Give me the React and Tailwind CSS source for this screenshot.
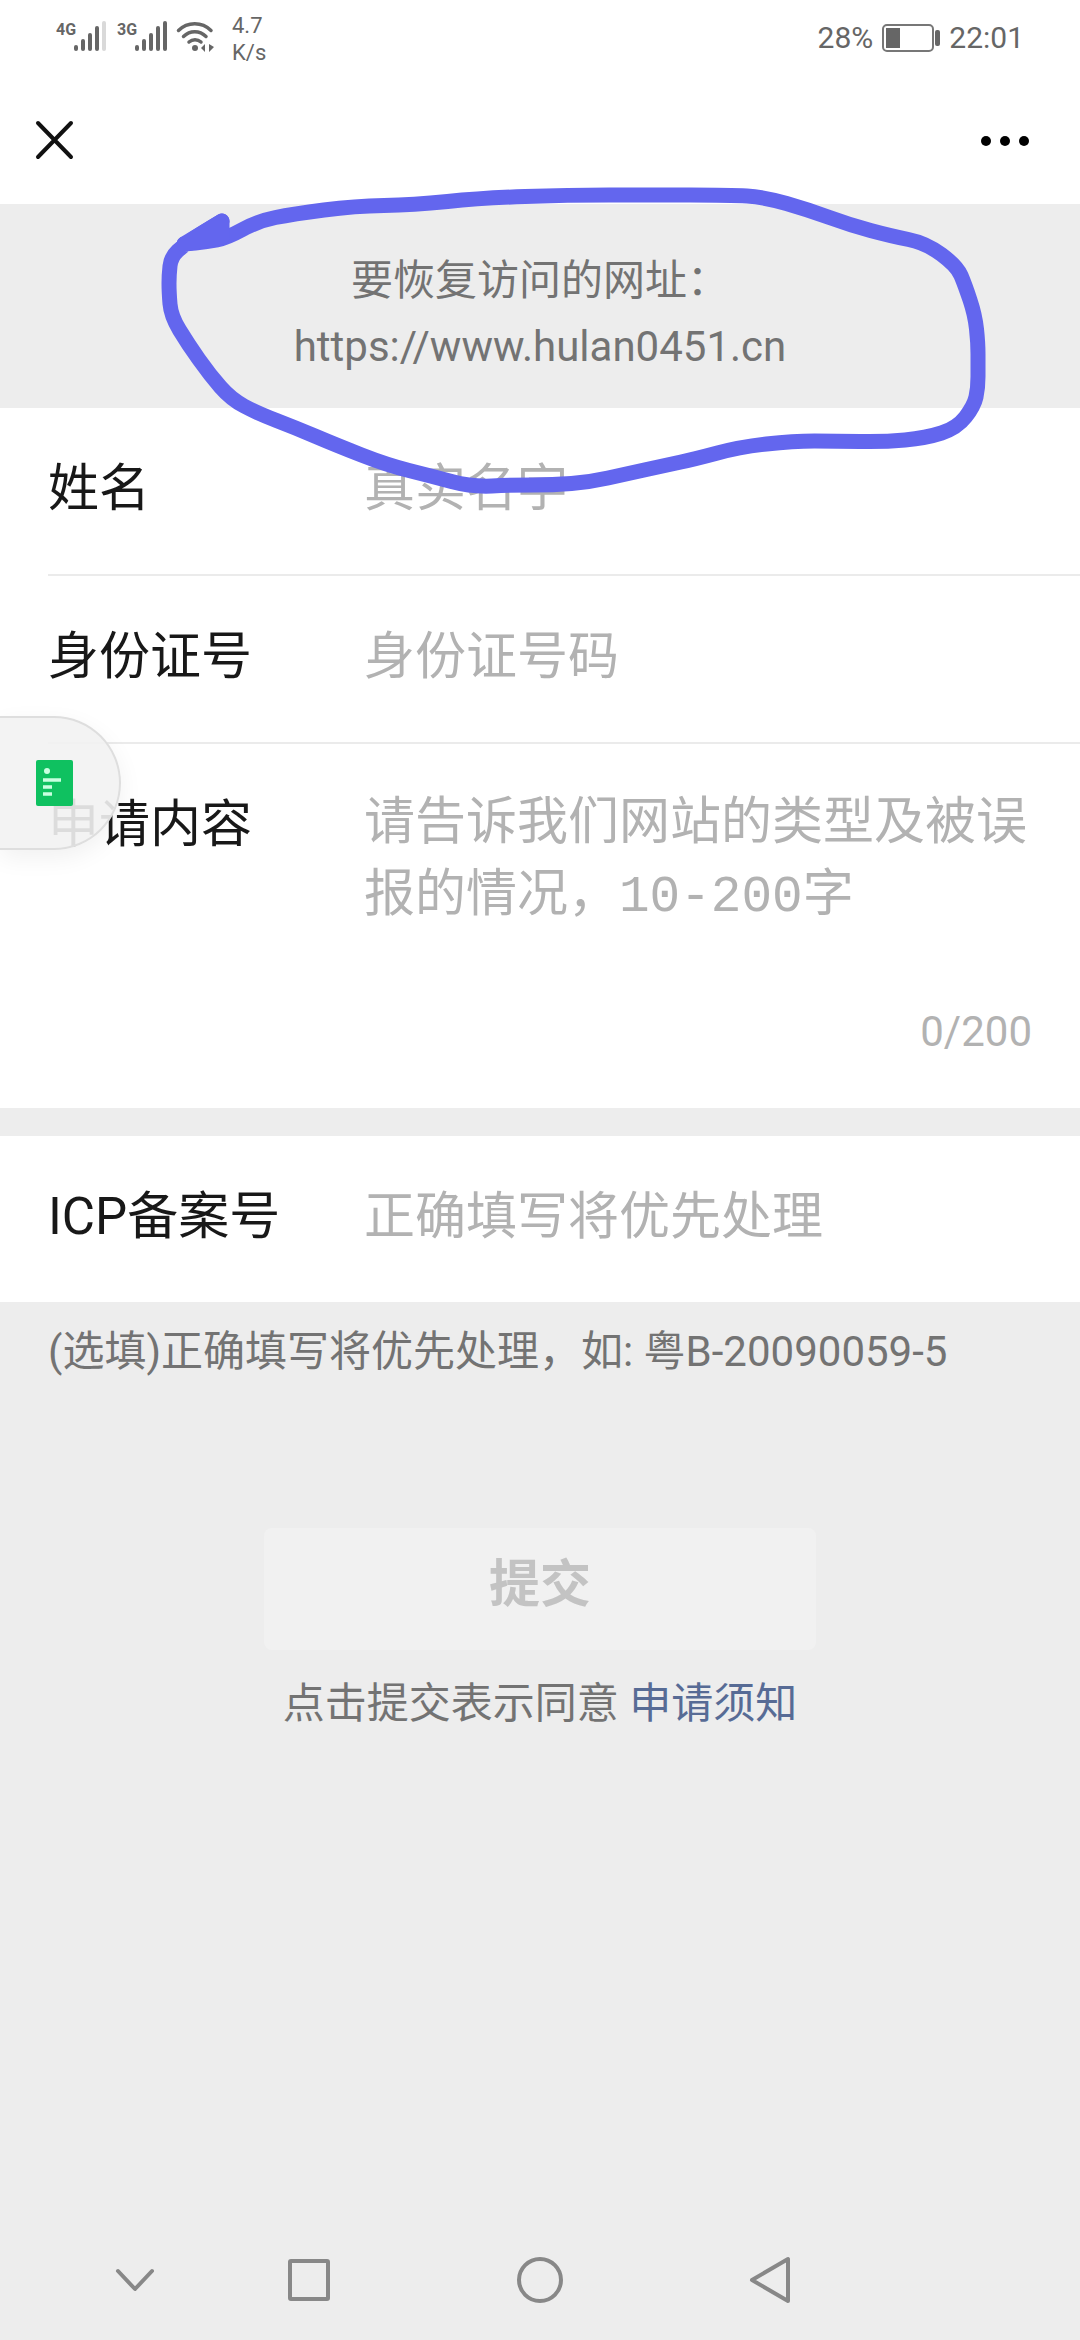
import React, { useState } from 'react';

const STROKE_POINTS = [
    [222, 221], [202, 233], [184, 245], [171, 257], [169, 275], [169, 292], [171, 316],
    [188, 344], [210, 375], [231, 399], [257, 413], [296, 428], [336, 445], [387, 465],
    [431, 476], [472, 487], [512, 485], [553, 485], [590, 482], [626, 474], [667, 465],
    [695, 459], [740, 447], [793, 441], [836, 441], [884, 442], [926, 438], [957, 428],
    [974, 406], [978, 388], [978, 365], [978, 343], [975, 315], [965, 285], [957, 266],
    [926, 243], [891, 236], [850, 225], [809, 210], [764, 197], [730, 195], [650, 195],
    [568, 195], [482, 198], [413, 205], [355, 206], [293, 214], [258, 221], [227, 238],
    [207, 242], [184, 244],
];

// joins the midpoints of the points with quadratic curves
const smoothPath = (points) => {
    let d = `M${points[0][0]} ${points[0][1]}`;
    for (let i = 1; i < points.length - 1; i++) {
        const [x, y] = points[i];
        const [nx, ny] = points[i + 1];
        d += ` Q${x} ${y} ${(x + nx) / 2} ${(y + ny) / 2}`;
    }
    const last = points[points.length - 1];
    return `${d} L${last[0]} ${last[1]}`;
};

const SignalIcon = ({ weak }) => (
    <svg className="h-8 w-[33px]" viewBox="0 0 33 32" fill="#666">
        <rect x="0" y="25" width="4" height="6" rx="2" />
        <rect x="7" y="19" width="4" height="12" rx="2" />
        <rect x="14" y="13" width="4" height="18" rx="2" />
        <rect x="21" y="6" width="4" height="25" rx="2" />
        <rect x="28" y="1" width="4" height="30" rx="2" fill={weak ? '#d9d9d9' : '#666'} />
    </svg>
);

const StatusBar = () => (
    <div className="flex h-20 items-start pl-14 pr-14 pt-3 text-[#666]">
        <div className="flex w-[61px] items-start pt-2">
            <span className="w-[18px] text-[16px] font-bold leading-[20px]">4G</span>
            <SignalIcon weak />
        </div>
        <div className="flex w-[59px] items-start pt-2">
            <span className="w-[18px] text-[16px] font-bold leading-[20px]">3G</span>
            <SignalIcon />
        </div>
        <svg className="mt-2 h-9 w-10" viewBox="0 0 40 36" fill="none" stroke="#666">
            <path d="M2.500 10.500C11.500 1.500 26 1.500 35 10.500" strokeWidth="3.500" strokeLinecap="round" />
            <path d="M7.500 16.500C14 10 23.500 10 30 16.500" strokeWidth="3.500" strokeLinecap="round" />
            <path d="M13 22C16.500 19 21.500 19 25 22" strokeWidth="3.500" strokeLinecap="round" />
            <circle cx="19" cy="28" r="3" fill="#666" stroke="none" />
            <path d="M29 24v8l-4-4zM33 24v8l5-5z" fill="#666" stroke="none" />
        </svg>
        <div className="ml-4 text-[22px] leading-[27px]">
            4.7
            <br />
            K/s
        </div>
        <div className="ml-auto flex items-center text-[30px] leading-[52px]">
            <span>28%</span>
            <svg className="mx-2 h-7 w-[60px]" viewBox="0 0 60 28">
                <rect x="2" y="1" width="50" height="26" rx="4" fill="none" stroke="#777" strokeWidth="2" />
                <rect x="5" y="4" width="14" height="20" fill="#666" />
                <rect x="54" y="6" width="5" height="16" rx="2" fill="#666" />
            </svg>
            <span>22:01</span>
        </div>
    </div>
);

const TitleBar = () => (
    <div className="flex h-[124px] items-center justify-between px-8">
        <button type="button" aria-label="关闭">
            <svg className="h-[46px] w-[46px]" viewBox="0 0 46 46" stroke="#111" strokeWidth="4" strokeLinecap="round">
                <path d="M6 4l33 34M39 4L6 38" />
            </svg>
        </button>
        <button type="button" aria-label="更多">
            <svg className="h-[46px] w-[84px]" viewBox="0 0 84 46" fill="#000">
                <circle cx="22" cy="22" r="5" />
                <circle cx="41" cy="22" r="5" />
                <circle cx="60" cy="22" r="5" />
            </svg>
        </button>
    </div>
);

const FormRow = ({ id, label, placeholder, value, onChange }) => (
    <div className="flex items-start pb-[50px] pt-[46px]">
        <label htmlFor={id} className="w-[316px] shrink-0 text-[#181818]">
            {label}
        </label>
        <input
            id={id}
            type="text"
            className="h-[70px] min-w-0 flex-1 bg-transparent leading-[70px] outline-none placeholder:text-[#b2b2b2]"
            placeholder={placeholder}
            value={value}
            onChange={onChange}
        />
    </div>
);

const FloatingTab = () => (
    <button
        type="button"
        aria-label="浮窗"
        className="absolute -top-7 left-0 flex h-[134px] w-[121px] items-center rounded-r-full border-2 border-l-0 border-[#dedede] bg-[#f2f2f2]/90 pl-9 shadow-[0_8px_24px_rgba(0,0,0,0.06)]"
    >
        <svg className="h-[46px] w-[38px]" viewBox="0 0 38 46">
            <rect x="0" y="0" width="37" height="46" rx="2" fill="#0fc160" />
            <circle cx="11" cy="11" r="3" fill="#c9ffe0" />
            <path d="M7 20h18M7 27h9M7 34h9" stroke="#c9ffe0" strokeWidth="3.500" />
        </svg>
    </button>
);

const SystemNav = () => (
    <nav className="mt-auto grid h-[120px] grid-cols-[77fr_116fr_231fr_231fr_231fr_194fr] items-center">
        <button type="button" aria-label="收起" className="col-start-2 flex justify-center">
            <svg className="h-12 w-12" viewBox="0 0 48 48" fill="none" stroke="#888" strokeWidth="4" strokeLinecap="round" strokeLinejoin="round">
                <path d="M7 15l17 18 17-18" />
            </svg>
        </button>
        <button type="button" aria-label="最近任务" className="flex justify-center">
            <svg className="h-12 w-12" viewBox="0 0 48 48" fill="none" stroke="#888" strokeWidth="4">
                <rect x="5" y="5" width="38" height="38" rx="1" />
            </svg>
        </button>
        <button type="button" aria-label="主页" className="flex justify-center">
            <svg className="h-12 w-12" viewBox="0 0 48 48" fill="none" stroke="#888" strokeWidth="4">
                <circle cx="24" cy="24" r="21" />
            </svg>
        </button>
        <button type="button" aria-label="返回" className="flex justify-center">
            <svg className="h-12 w-12" viewBox="0 0 48 48" fill="none" stroke="#888" strokeWidth="4" strokeLinejoin="round">
                <path d="M41 3v42L5 24z" />
            </svg>
        </button>
    </nav>
);

const App = () => {
    const [form, setForm] = useState({ name: '', idCard: '', content: '', icp: '' });

    const handleChange = (field) => (e) => {
        setForm({ ...form, [field]: e.target.value });
    };

    return (
        <div className="relative flex min-h-screen flex-col bg-[#ededed] font-['Roboto','Noto_Sans_CJK_SC',sans-serif]">
            <header className="bg-white">
                <StatusBar />
                <TitleBar />
            </header>

            <div className="pb-7 pt-11 text-center text-[42px] leading-[66px] text-[#737373]">
                <p>要恢复访问的网址：</p>
                <p>https://www.hulan0451.cn</p>
            </div>

            <form onSubmit={(e) => e.preventDefault()}>
                <div className="bg-white text-[51px] leading-[70px]">
                    <div className="ml-12 border-b-2 border-[#ebebeb]">
                        <FormRow
                            id="name"
                            label="姓名"
                            placeholder="真实名字"
                            value={form.name}
                            onChange={handleChange('name')}
                        />
                    </div>
                    <div className="ml-12 border-b-2 border-[#ebebeb]">
                        <FormRow
                            id="idCard"
                            label="身份证号"
                            placeholder="身份证号码"
                            value={form.idCard}
                            onChange={handleChange('idCard')}
                        />
                    </div>
                    <div className="relative flex items-start px-12 pb-12 pt-[46px]">
                        <label htmlFor="content" className="w-[316px] shrink-0 text-[#181818]">
                            申请内容
                        </label>
                        <div className="min-w-0 flex-1">
                            <textarea
                                id="content"
                                maxLength={200}
                                className="block h-[214px] w-full resize-none bg-transparent font-['Liberation_Mono','Noto_Sans_CJK_SC',monospace] leading-[72px] outline-none placeholder:text-[#b2b2b2]"
                                placeholder="请告诉我们网站的类型及被误报的情况，10-200字"
                                value={form.content}
                                onChange={handleChange('content')}
                            />
                            <div className="text-right text-[42px] leading-[56px] text-[#b2b2b2]">
                                {form.content.length}/200
                            </div>
                        </div>
                        <FloatingTab />
                    </div>
                </div>

                <div className="mt-7 bg-white pl-12 text-[51px] leading-[70px]">
                    <FormRow
                        id="icp"
                        label="ICP备案号"
                        placeholder="正确填写将优先处理"
                        value={form.icp}
                        onChange={handleChange('icp')}
                    />
                </div>
                <p className="px-12 pt-5 text-[42px] leading-[60px] text-[#737373]">
                    (选填)正确填写将优先处理，如: 粤B-20090059-5
                </p>

                <button
                    type="submit"
                    disabled
                    className="mx-auto mt-[146px] block h-[122px] w-[552px] rounded-lg bg-[#f1f1f1] pb-2 text-[51px] font-bold text-[#c3c3c3]"
                >
                    提交
                </button>
                <p className="mt-6 text-center text-[42px] leading-[60px] text-[#737373]">
                    点击提交表示同意{' '}
                    <a href="#notice" className="text-[#576b95]">
                        申请须知
                    </a>
                </p>
            </form>

            <SystemNav />

            {/* hand-drawn ring round the address */}
            <svg
                className="pointer-events-none absolute left-0 top-0 w-full"
                viewBox="0 0 1080 520"
                fill="none"
                stroke="#6366ee"
                strokeWidth="15"
                strokeLinecap="round"
                strokeLinejoin="round"
            >
                <path d={smoothPath(STROKE_POINTS)} />
                <path d="M222 221L184 244L222 237z" fill="#6366ee" />
            </svg>
        </div>
    );
};

export default App;
